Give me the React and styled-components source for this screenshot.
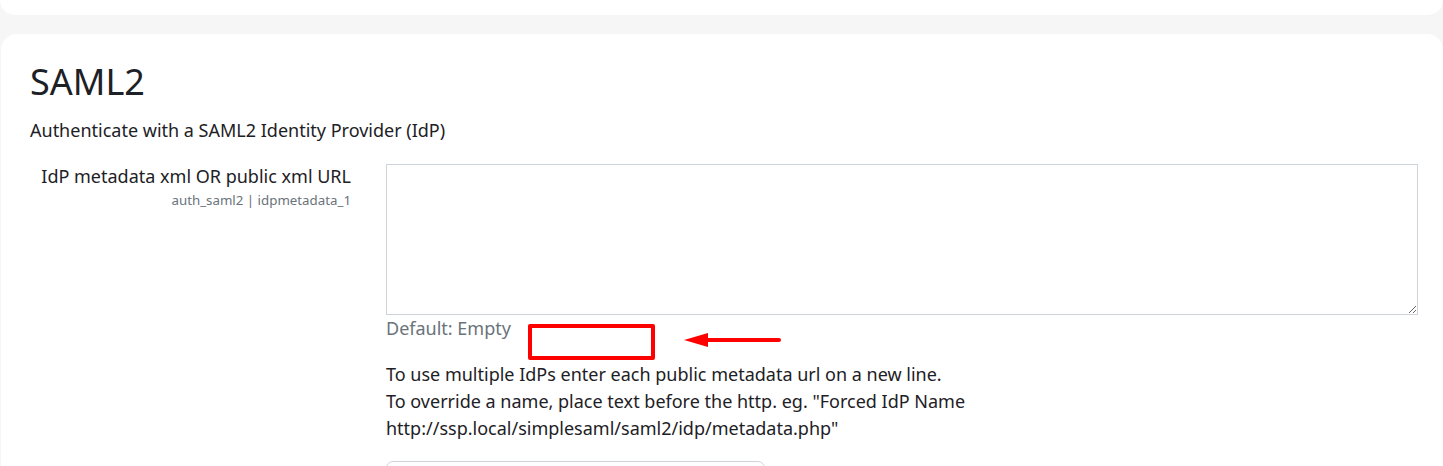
import React from 'react';
import styled, { createGlobalStyle } from 'styled-components';

const GlobalStyle = createGlobalStyle`
  html, body {
    margin: 0;
    padding: 0;
    background: #f6f6f6;
    font-family: "Noto Sans", "Open Sans", sans-serif;
    color: #1d2125;
  }
  * { box-sizing: border-box; }
`;

const Page = styled.div`
  display: flex;
  flex-direction: column;
  gap: 19px;
  height: 466px;
  overflow: hidden;
`;

const TopCard = styled.div`
  flex-shrink: 0;
  height: 15px;
  background: #ffffff;
  border-radius: 0 0 16px 16px;
`;

const Card = styled.section`
  flex-shrink: 0;
  background: #ffffff;
  border-radius: 16px 16px 0 0;
  margin-left: 1px;
  padding: 27px 25px 0 29px;
`;

const Title = styled.h2`
  margin: 0;
  font-size: 36px;
  font-weight: 400;
  line-height: 42px;
`;

const Intro = styled.p`
  margin: 14px 0 20px;
  font-size: 18px;
  line-height: 27px;
`;

const Row = styled.div`
  display: grid;
  grid-template-columns: 321px 1fr;
  column-gap: 35px;
`;

const LabelCol = styled.div`
  text-align: right;
`;

const Label = styled.label`
  display: block;
  font-size: 18px;
  line-height: 27px;
  margin-top: -1px;
`;

const Setting = styled.div`
  font-size: 13.3px;
  line-height: 20px;
  color: #6a737b;
`;

const FieldCol = styled.div`
  position: relative;
  display: flex;
  flex-direction: column;
`;

const TextArea = styled.textarea`
  display: block;
  width: 100%;
  height: 151px;
  border: 1px solid #ced4da;
  border-radius: 0;
  background: #fff;
  font: inherit;
  resize: vertical;
  outline: none;
`;

const DefaultInfo = styled.div`
  font-size: 18px;
  line-height: 27px;
  color: #6a737b;
`;

const Description = styled.div`
  margin-top: 19px;
  font-size: 18px;
  line-height: 27px;
`;

const NextField = styled.div`
  margin-top: 19px;
  width: 379px;
  height: 40px;
  border: 1px solid #ced4da;
  border-radius: 7px;
`;

const Highlight = styled.div`
  position: absolute;
  left: 142px;
  top: 160px;
  width: 127px;
  height: 36px;
  border: 4px solid #ff0000;
  border-radius: 2px;
`;

const Arrow = styled.svg`
  position: absolute;
  left: 297px;
  top: 168px;
`;

export default function App() {
  return (
    <>
      <GlobalStyle />
      <Page>
        <TopCard />
        <Card>
          <Title>SAML2</Title>
          <Intro>Authenticate with a SAML2 Identity Provider (IdP)</Intro>
          <Row>
            <LabelCol>
              <Label htmlFor="idpmetadata">IdP metadata xml OR public xml URL</Label>
              <Setting>auth_saml2 | idpmetadata_1</Setting>
            </LabelCol>
            <FieldCol>
              <TextArea id="idpmetadata" />
              <DefaultInfo>Default: Empty</DefaultInfo>
              <Description>
                To use multiple IdPs enter each public metadata url on a new line.
                <br />
                To override a name, place text before the http. eg. "Forced IdP Name
                <br />
                http://ssp.local/simplesaml/saml2/idp/metadata.php"
              </Description>
              <NextField />
              <Highlight />
              <Arrow width="102" height="16" viewBox="0 0 102 16">
                <path d="M24 8 H96" stroke="#ff0000" strokeWidth="4" strokeLinecap="round" />
                <path d="M1 8 L25 1 L25 15 Z" fill="#ff0000" />
              </Arrow>
            </FieldCol>
          </Row>
        </Card>
      </Page>
    </>
  );
}
